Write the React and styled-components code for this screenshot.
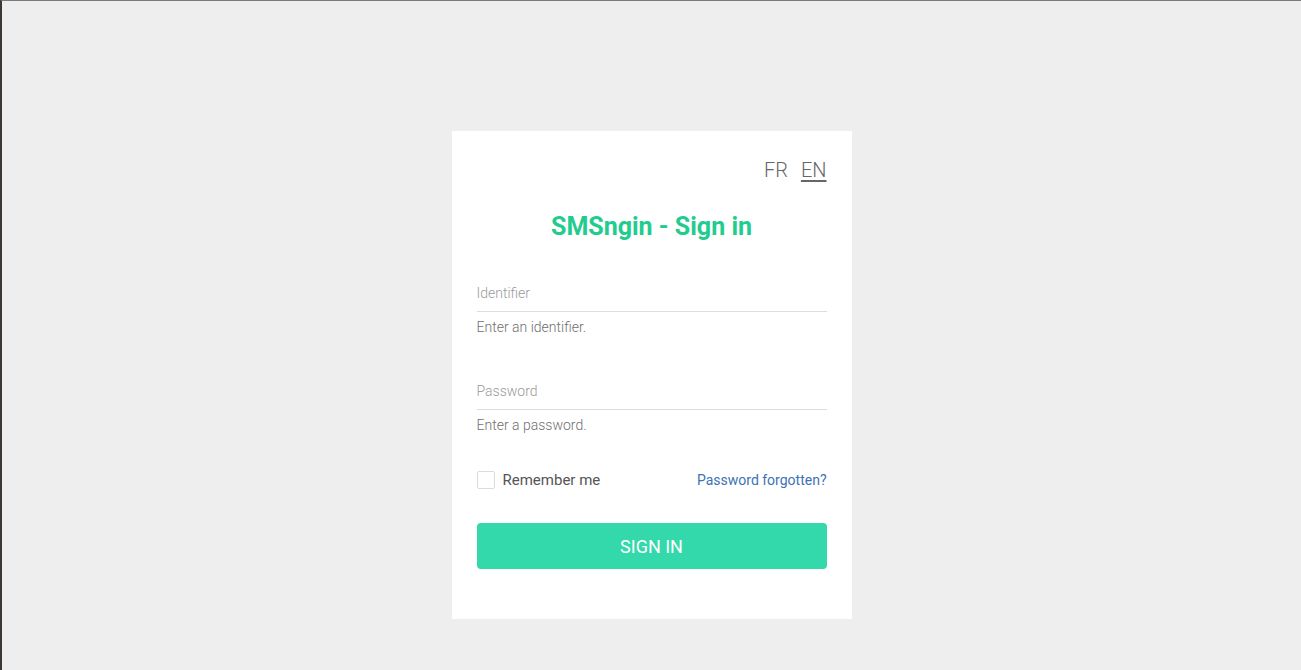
import React from 'react';
import styled, { createGlobalStyle } from 'styled-components';

const GlobalStyle = createGlobalStyle`
  html, body {
    margin: 0;
    padding: 0;
  }
  body {
    background: #eeeeee;
    font-family: Roboto, "Open Sans", sans-serif;
    min-height: 670px;
    box-sizing: border-box;
    border-top: 1px solid #7a7a7a;
    border-left: 2px solid #3d3833;
  }
`;

const Page = styled.div`
  display: flex;
  justify-content: center;
  padding-top: 130px;
`;

const Card = styled.form`
  width: 400px;
  box-sizing: border-box;
  background: #fff;
  padding: 25px 25px 50px;
  display: flex;
  flex-direction: column;
`;

const LangRow = styled.div`
  display: flex;
  justify-content: flex-end;
  gap: 13px;
  height: 28px;
  align-items: center;
`;

const Lang = styled.a`
  font-size: 20px;
  font-weight: 300;
  color: #666;
  text-decoration: ${p => (p.$active ? 'underline' : 'none')};
  text-underline-offset: 3px;
  cursor: pointer;
`;

const Title = styled.h1`
  margin: 27px 0 0;
  text-align: center;
  font-size: 25px;
  line-height: 32px;
  font-weight: 700;
  color: #22cc8e;
`;

const Field = styled.div`
  display: flex;
  flex-direction: column;
  margin-top: ${p => p.$top}px;
`;

const Input = styled.input`
  border: none;
  border-bottom: 1px solid #dddddd;
  height: 36px;
  padding: 0;
  font-family: inherit;
  font-size: 14px;
  font-weight: 300;
  color: #555;
  outline: none;
  &::placeholder {
    color: #9a9a9a;
  }
`;

const Helper = styled.div`
  font-size: 14px;
  font-weight: 300;
  color: #6f6f6f;
  margin-top: 6px;
  line-height: 18px;
`;

const OptionsRow = styled.div`
  display: flex;
  justify-content: space-between;
  align-items: center;
  margin-top: 37px;
`;

const Remember = styled.label`
  display: flex;
  align-items: center;
  gap: 8px;
  font-size: 15px;
  color: #555;
`;

const Box = styled.span`
  width: 16px;
  height: 16px;
  border: 1px solid #dcdcdc;
  border-radius: 2px;
  background: #fff;
`;

const Forgot = styled.a`
  font-size: 14px;
  color: #3d72b4;
  cursor: pointer;
`;

const Button = styled.button`
  margin-top: 34px;
  height: 46px;
  border: none;
  border-radius: 4px;
  background: #33d9aa;
  color: #fff;
  font-family: inherit;
  font-size: 18px;
  font-weight: 400;
  cursor: pointer;
`;

export default function App() {
  return (
    <>
      <GlobalStyle />
      <Page>
        <Card onSubmit={e => e.preventDefault()}>
          <LangRow>
            <Lang>FR</Lang>
            <Lang $active>EN</Lang>
          </LangRow>
          <Title>SMSngin - Sign in</Title>
          <Field $top={32}>
            <Input placeholder="Identifier" />
            <Helper>Enter an identifier.</Helper>
          </Field>
          <Field $top={37}>
            <Input type="password" placeholder="Password" />
            <Helper>Enter a password.</Helper>
          </Field>
          <OptionsRow>
            <Remember>
              <Box />
              Remember me
            </Remember>
            <Forgot>Password forgotten?</Forgot>
          </OptionsRow>
          <Button type="submit">SIGN IN</Button>
        </Card>
      </Page>
    </>
  );
}
